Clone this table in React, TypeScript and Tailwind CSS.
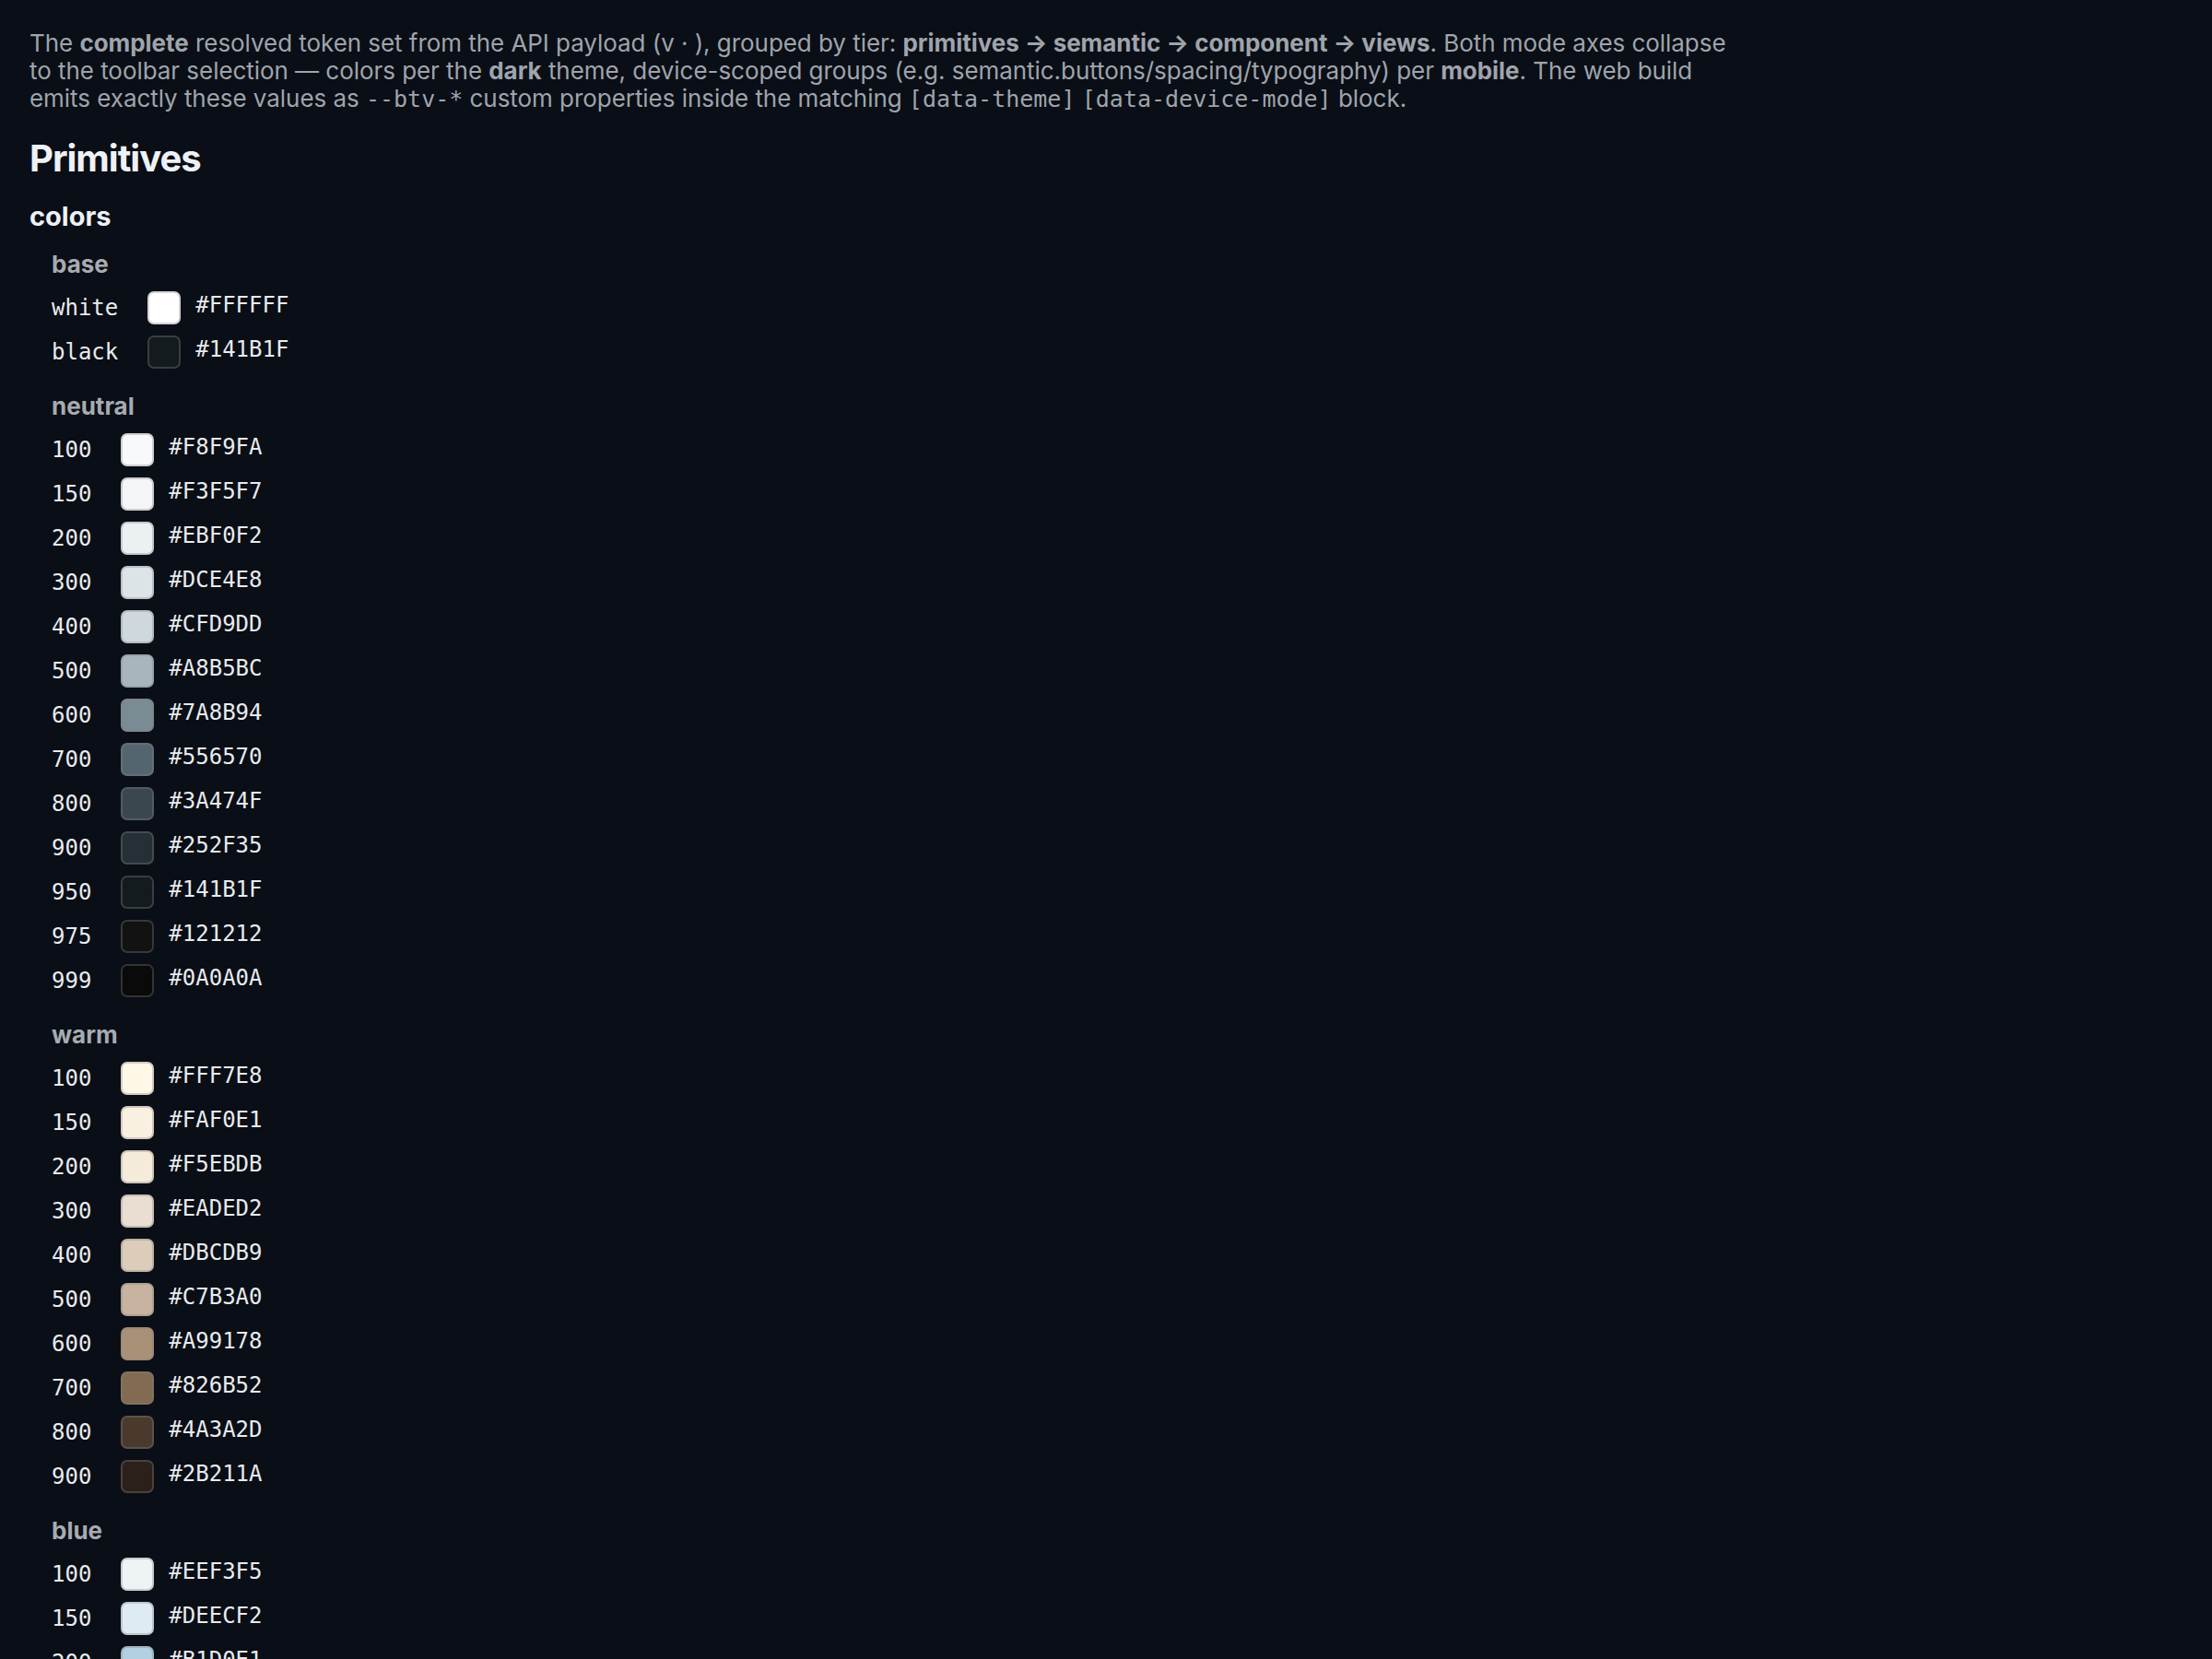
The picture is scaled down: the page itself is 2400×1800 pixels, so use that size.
const MONO = "font-['DejaVu_Sans_Mono',monospace]";

type Swatch = { name: string; hex: string };
type Group = { name: string; items: Swatch[] };

const groups: Group[] = [
  {
    name: "base",
    items: [
      { name: "white", hex: "#FFFFFF" },
      { name: "black", hex: "#141B1F" },
    ],
  },
  {
    name: "neutral",
    items: [
      { name: "100", hex: "#F8F9FA" },
      { name: "150", hex: "#F3F5F7" },
      { name: "200", hex: "#EBF0F2" },
      { name: "300", hex: "#DCE4E8" },
      { name: "400", hex: "#CFD9DD" },
      { name: "500", hex: "#A8B5BC" },
      { name: "600", hex: "#7A8B94" },
      { name: "700", hex: "#556570" },
      { name: "800", hex: "#3A474F" },
      { name: "900", hex: "#252F35" },
      { name: "950", hex: "#141B1F" },
      { name: "975", hex: "#121212" },
      { name: "999", hex: "#0A0A0A" },
    ],
  },
  {
    name: "warm",
    items: [
      { name: "100", hex: "#FFF7E8" },
      { name: "150", hex: "#FAF0E1" },
      { name: "200", hex: "#F5EBDB" },
      { name: "300", hex: "#EADED2" },
      { name: "400", hex: "#DBCDB9" },
      { name: "500", hex: "#C7B3A0" },
      { name: "600", hex: "#A99178" },
      { name: "700", hex: "#826B52" },
      { name: "800", hex: "#4A3A2D" },
      { name: "900", hex: "#2B211A" },
    ],
  },
  {
    name: "blue",
    items: [
      { name: "100", hex: "#EEF3F5" },
      { name: "150", hex: "#DEECF2" },
      { name: "200", hex: "#B1D0E1" },
    ],
  },
];

function ColorGroup({ group }: { group: Group }) {
  return (
    <div className="mt-[26px] first:mt-5">
      <h4 className="mb-[14px] text-[26px] leading-[30px] font-bold text-[#a7abb1]">{group.name}</h4>
      <div className="grid grid-cols-[max-content_max-content_1fr] items-center gap-y-3">
        {group.items.map((item) => (
          <div key={item.name} className="contents">
            <span className={`${MONO} pr-8 text-[24px] leading-[28px] text-[#e8ebee]`}>{item.name}</span>
            <span
              className="h-9 w-9 rounded-[7px] border-2 border-[rgba(128,128,128,0.35)]"
              style={{ backgroundColor: item.hex }}
            />
            <span className={`${MONO} mb-[6px] pl-4 text-[24px] leading-[28px] text-[#e8ebee]`}>{item.hex}</span>
          </div>
        ))}
      </div>
    </div>
  );
}

export default function App() {
  return (
    <div className="min-h-screen bg-[#0a0e16] p-8 font-['Inter',sans-serif]">
      <p className="max-w-[1850px] text-[26px] leading-[30px] tracking-[-0.05px] text-[#9fa4ab]">
        The <b className="font-bold">complete</b> resolved token set from the API payload (v · ), grouped by tier:{" "}
        <b className="font-bold">primitives → semantic → component → views</b>. Both mode axes collapse to the
        toolbar selection — colors per the <b className="font-bold">dark</b> theme, device-scoped groups (e.g.
        semantic.buttons/spacing/typography) per <b className="font-bold">mobile</b>. The web build emits exactly
        these values as <code className={`${MONO} text-[25px] tracking-normal`}>--btv-*</code> custom properties
        inside the matching <code className={`${MONO} text-[25px] tracking-normal`}>[data-theme]</code>{" "}
        <code className={`${MONO} text-[25px] tracking-normal`}>[data-device-mode]</code> block.
      </p>

      <h2 className="mt-6 text-[40px] leading-[50px] font-bold tracking-[-0.025em] text-[#eef1f5]">Primitives</h2>

      <h3 className="mt-5 text-[29px] leading-[35px] font-bold text-[#eef1f5]">colors</h3>
      <div className="ml-6">
        {groups.map((g) => (
          <ColorGroup key={g.name} group={g} />
        ))}
      </div>
    </div>
  );
}
